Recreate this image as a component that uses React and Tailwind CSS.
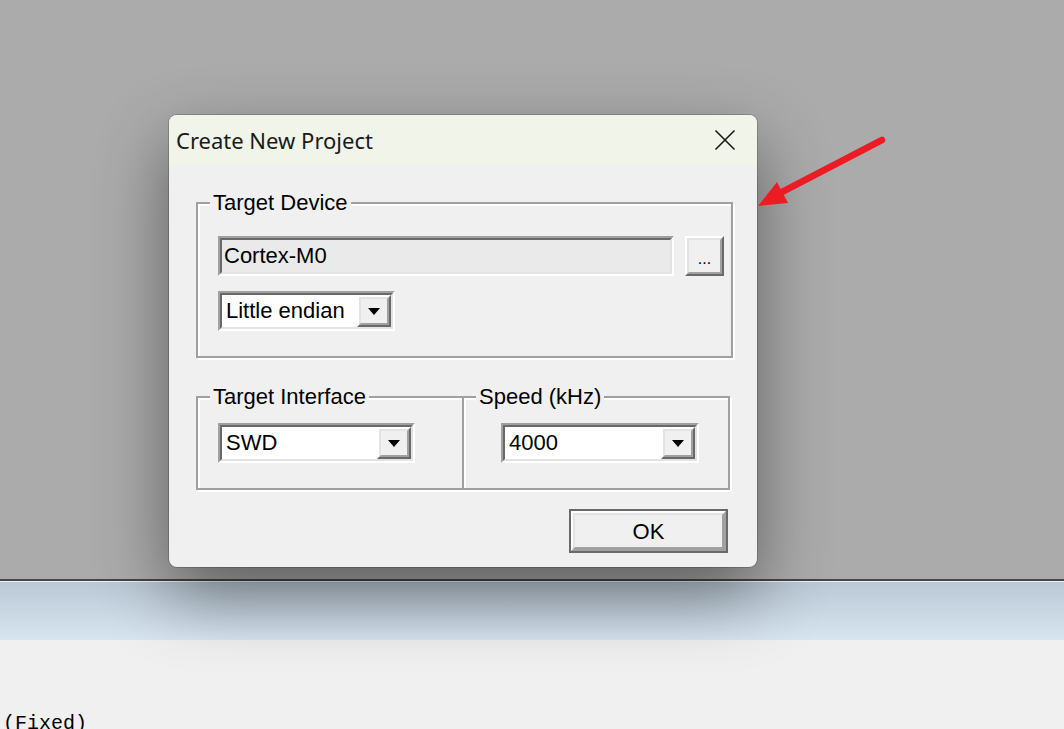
// Create New Project dialog over a greyed-out IDE window
import React from 'react'

const UI_FONT = "font-['Liberation_Sans',Arial,sans-serif]"

// 2-px classic sunken frame (edit / combo)
function Sunken({ className = '', inner = '', children }) {
  return (
    <div className={`border-2 border-t-[#a0a0a0] border-l-[#a0a0a0] border-b-white border-r-white ${className}`}>
      <div className={`h-full border-2 border-t-[#696969] border-l-[#696969] border-b-[#e3e3e3] border-r-[#e3e3e3] ${inner}`}>
        {children}
      </div>
    </div>
  )
}

// classic raised button face
function Raised({ className = '', children }) {
  return (
    <div className={`border-2 border-t-white border-l-white border-b-[#696969] border-r-[#696969] ${className}`}>
      <div className="h-full flex items-center justify-center border-2 border-t-[#e3e3e3] border-l-[#e3e3e3] border-b-[#a0a0a0] border-r-[#a0a0a0] bg-[#f0f0f0]">
        {children}
      </div>
    </div>
  )
}

function Combo({ value, className = '' }) {
  return (
    <Sunken className={className} inner="bg-white flex items-stretch">
      <span className="flex-1 pl-[4px] text-[22px] leading-[32px] text-black">{value}</span>
      <Raised className="w-[34px]">
        <svg width="12" height="7" viewBox="0 0 12 7">
          <path d="M0 0h12L6 7z" fill="#000" />
        </svg>
      </Raised>
    </Sunken>
  )
}

// etched group box, label sits over the top line
function GroupBox({ label, className = '', children }) {
  return (
    <div className={`relative border-2 border-[#a0a0a0] shadow-[inset_2px_2px_0_#fff,2px_2px_0_#fff] ${className}`}>
      <span className="absolute left-[12px] top-[-12px] bg-[#f0f0f0] px-[3px] text-[22px] leading-[22px] text-black whitespace-nowrap">
        {label}
      </span>
      {children}
    </div>
  )
}

export default function App() {
  return (
    <div className="relative w-[1064px] h-[729px] overflow-hidden flex flex-col">
      {/* background app */}
      <div className="h-[579px] shrink-0 bg-[#ababab]" />
      <div className="h-[2px] shrink-0 bg-[#454545]" />
      <div className="h-px shrink-0 bg-[#eef2f6]" />
      <div className="h-[58px] shrink-0 bg-linear-to-b from-[#bac8d5] to-[#d8e5f1]" />
      <div className="flex-1 bg-[#f0f0f0] pt-[71px] pl-[3px]">
        <span className="font-['Liberation_Mono',monospace] text-[20px] leading-[22px] text-black">(Fixed)</span>
      </div>

      {/* dialog */}
      <div className="absolute left-[169px] top-[115px] z-10 w-[588px] h-[452px] rounded-[8px] overflow-hidden bg-[#f0f0f0] shadow-[0_0_0_1px_rgba(0,0,0,0.18),0_28px_70px_rgba(0,0,0,0.45)] flex flex-col">
        <div className="h-[50px] bg-[#f1f4e8] flex items-center justify-between pl-[7px] pr-[21px]">
          <span className="font-['Noto_Sans',sans-serif] text-[22px] text-[#1a1a1a]">Create New Project</span>
          <svg width="22" height="22" viewBox="0 0 22 22">
            <path d="M1.5 1.5l19 19M20.5 1.5l-19 19" stroke="#1a1a1a" strokeWidth="1.6" />
          </svg>
        </div>

        <div className={`flex-1 pl-[27px] pt-[37px] flex flex-col w-[565px] ${UI_FONT}`}>
          <GroupBox label="Target Device" className="w-[537px] h-[156px] pl-[20px] pt-[32px]">
            <div className="flex gap-[11px]">
              <Sunken className="w-[456px] h-[40px]" inner="bg-[#eaeaea] flex items-center">
                <span className="pl-[2px] text-[22px] leading-[32px] text-black">Cortex-M0</span>
              </Sunken>
              <Raised className="w-[39px] h-[40px]">
                <span className="text-[16px] leading-[16px] text-black pt-[6px]">...</span>
              </Raised>
            </div>
            <Combo value="Little endian" className="mt-[15px] w-[177px] h-[40px]" />
          </GroupBox>

          <div className="flex mt-[38px]">
            <GroupBox label="Target Interface" className="w-[268px] h-[94px] pl-[20px] pt-[25px]">
              <Combo value="SWD" className="w-[197px] h-[40px]" />
            </GroupBox>
            <GroupBox label="Speed (kHz)" className="w-[268px] h-[94px] -ml-[2px] pl-[37px] pt-[25px]">
              <Combo value="4000" className="w-[198px] h-[40px]" />
            </GroupBox>
          </div>

          <div className="flex justify-end w-[532px] mt-[19px]">
            <div className="w-[159px] h-[44px] border-2 border-[#696969]">
              <Raised className="h-full border-t-white border-l-white border-b-[#a0a0a0] border-r-[#a0a0a0]">
                <span className="text-[22px] text-black">OK</span>
              </Raised>
            </div>
          </div>
        </div>
      </div>

      {/* red annotation arrow */}
      <svg className="absolute left-[750px] top-[130px] z-20" width="140" height="85" viewBox="0 0 140 85">
        <line x1="132" y1="10" x2="32" y2="62" stroke="#ed1c24" strokeWidth="6.5" strokeLinecap="round" />
        <path d="M8 76L27 52L38 73Z" fill="#ed1c24" />
      </svg>
    </div>
  )
}
